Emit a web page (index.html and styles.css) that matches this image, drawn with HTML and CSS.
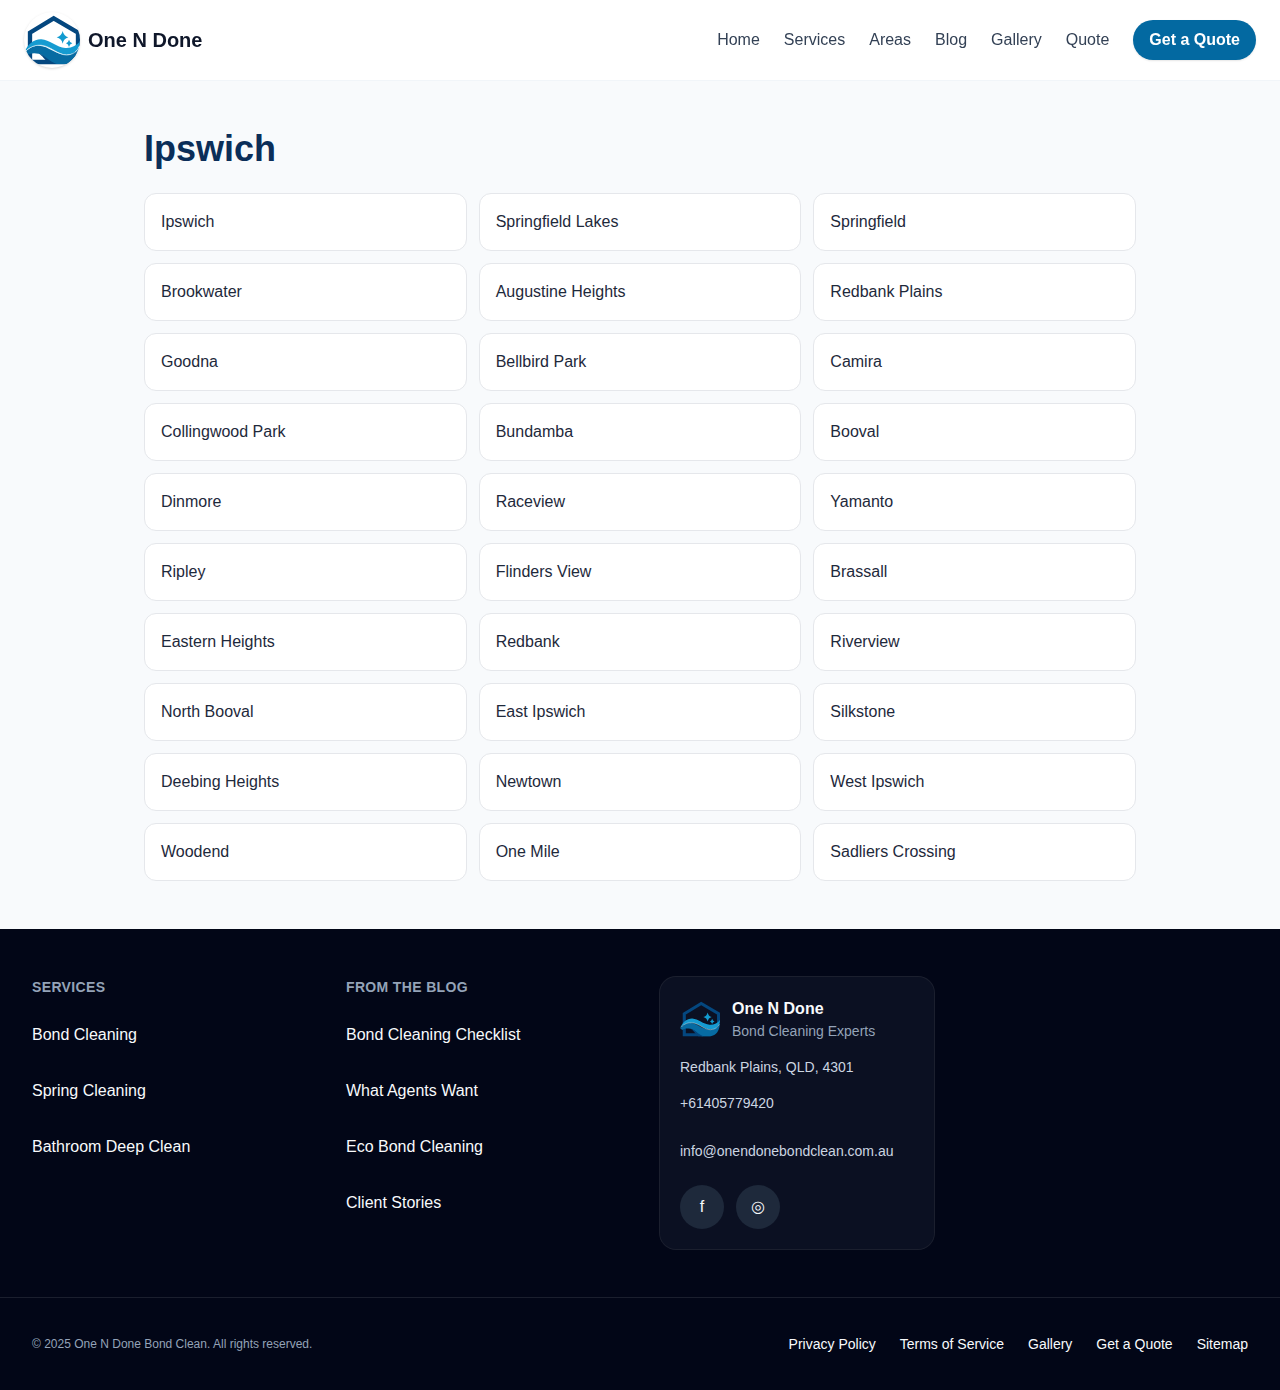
FILE: index.html
```html
<!DOCTYPE html>
<html lang="en">
<head>
<meta charset="utf-8">
<title>Ipswich | One N Done</title>
<link rel="stylesheet" href="styles.css">
</head>
<body>
<svg class="defs" width="0" height="0" aria-hidden="true">
  <symbol id="logo" viewBox="24 24 168 168">
    <path class="house" d="M42 130V86L113 43L186 86V126M42 140V174H152L180 146"/>
    <path class="star" d="M140 81Q143 96 157 100Q143 104 140 119Q137 104 122 100Q137 96 140 81ZM159 107Q161 116 169 118Q161 120 159 129Q157 120 150 118Q157 116 159 107Z"/>
    <path class="wave-dark" d="M25 148C42 126 66 120 90 130C114 142 134 155 156 153C174 151 184 143 192 124C190 156 178 180 150 180H116C98 176 88 154 68 149C54 146 42 147 34 154Z"/>
    <path class="wave-light" d="M25 145C36 120 54 105 76 106C100 108 122 130 148 132C168 133 182 124 192 112C190 138 174 152 152 152C126 152 106 128 76 124C56 122 40 129 25 145Z"/>
    <path class="wave-line" d="M28 143C42 127 60 122 78 124C106 128 126 153 152 153C172 152 184 142 190 128"/>
    <path class="wave-deep" d="M70 149C88 154 98 171 122 180H100C90 172 84 160 70 149Z"/>
  </symbol>
</svg>

<header class="site-header">
  <a class="brand" href="#"><svg class="brand-logo"><use href="#logo"/></svg><span>One N Done</span></a>
  <nav class="main-nav">
    <a href="#">Home</a><a href="#">Services</a><a href="#">Areas</a><a href="#">Blog</a><a href="#">Gallery</a><a href="#">Quote</a>
    <a class="cta" href="#">Get a Quote</a>
  </nav>
</header>

<main class="content">
  <h1>Ipswich</h1>
  <div class="suburbs">
    <a href="#">Ipswich</a><a href="#">Springfield Lakes</a><a href="#">Springfield</a>
    <a href="#">Brookwater</a><a href="#">Augustine Heights</a><a href="#">Redbank Plains</a>
    <a href="#">Goodna</a><a href="#">Bellbird Park</a><a href="#">Camira</a>
    <a href="#">Collingwood Park</a><a href="#">Bundamba</a><a href="#">Booval</a>
    <a href="#">Dinmore</a><a href="#">Raceview</a><a href="#">Yamanto</a>
    <a href="#">Ripley</a><a href="#">Flinders View</a><a href="#">Brassall</a>
    <a href="#">Eastern Heights</a><a href="#">Redbank</a><a href="#">Riverview</a>
    <a href="#">North Booval</a><a href="#">East Ipswich</a><a href="#">Silkstone</a>
    <a href="#">Deebing Heights</a><a href="#">Newtown</a><a href="#">West Ipswich</a>
    <a href="#">Woodend</a><a href="#">One Mile</a><a href="#">Sadliers Crossing</a>
  </div>
</main>

<footer class="site-footer">
  <div class="footer-grid">
    <section class="link-column">
      <h2>Services</h2>
      <a href="#">Bond Cleaning</a><a href="#">Spring Cleaning</a><a href="#">Bathroom Deep Clean</a>
    </section>
    <section class="link-column">
      <h2>From the Blog</h2>
      <a href="#">Bond Cleaning Checklist</a><a href="#">What Agents Want</a><a href="#">Eco Bond Cleaning</a><a href="#">Client Stories</a>
    </section>
    <section class="contact-card">
      <div class="contact-head">
        <svg class="contact-logo"><use href="#logo"/></svg>
        <div><p class="contact-name">One N Done</p><p class="contact-tag">Bond Cleaning Experts</p></div>
      </div>
      <address>
        <span>Redbank Plains, QLD, 4301</span>
        <a href="#">+61405779420</a>
        <a href="#">info@onendonebondclean.com.au</a>
      </address>
      <div class="social"><a href="#">f</a><a href="#">◎</a></div>
    </section>
  </div>
  <div class="footer-bottom">
    <p>© 2025 One N Done Bond Clean. All rights reserved.</p>
    <nav><a href="#">Privacy Policy</a><a href="#">Terms of Service</a><a href="#">Gallery</a><a href="#">Get a Quote</a><a href="#">Sitemap</a></nav>
  </div>
</footer>
</body>
</html>
```
FILE: styles.css
```css
* { box-sizing: border-box; margin: 0; padding: 0; }
body {
  font: 16px/24px "Liberation Sans", Arial, sans-serif;
  color: #1e293b;
  background: #f8fafc;
}
a { color: inherit; text-decoration: none; }
.defs { position: absolute; }

.house { fill: none; stroke: #04477f; stroke-width: 13; }
.contact-logo .house { stroke-width: 11; }
.star { fill: #129bd0; }
.wave-light { fill: #159bd1; }
.wave-dark { fill: #076ba2; }
.wave-line { fill: none; stroke: #d5edf7; stroke-width: 2; }
.contact-logo .wave-line { stroke-width: 1; }
.wave-deep { fill: #04477f; }

.site-header {
  position: sticky;
  top: 0;
  z-index: 10;
  display: flex;
  align-items: center;
  justify-content: space-between;
  height: 81px;
  padding: 0 24px;
  background: rgba(255, 255, 255, .95);
  border-bottom: 1px solid #f1f5f9;
  backdrop-filter: blur(8px);
}
.brand { display: flex; align-items: center; gap: 8px; font-size: 20px; font-weight: 700; color: #0f172a; }
.brand-logo { width: 56px; height: 56px; border-radius: 50%; background: #fff; box-shadow: 0 1px 3px rgba(0, 0, 0, .1), 0 1px 2px rgba(0, 0, 0, .06); }
.main-nav { display: flex; align-items: center; gap: 24px; color: #334155; }
.cta {
  padding: 8px 16px;
  border-radius: 20px;
  background: #0369a1;
  color: #fff;
  font-weight: 700;
  box-shadow: 0 1px 2px rgba(0, 0, 0, .1);
}

.content { width: 1024px; margin: 0 auto; padding: 48px 16px; }
h1 { margin-bottom: 24px; font-size: 36px; line-height: 40px; color: #0b2e59; }
.suburbs { display: grid; grid-template-columns: repeat(3, 1fr); gap: 12px; }
.suburbs a { padding: 16px; border: 1px solid #e5e7eb; border-radius: 12px; background: #fff; }

.site-footer { background: #020617; color: #f8fafc; }
.footer-grid {
  display: grid;
  grid-template-columns: repeat(4, 1fr);
  gap: 40px;
  padding: 48px 32px;
}
.link-column { display: flex; flex-direction: column; gap: 12px; }
.link-column h2 {
  margin-bottom: 4px;
  font-size: 14px;
  line-height: 20px;
  letter-spacing: .35px;
  text-transform: uppercase;
  color: #94a3b8;
}
.link-column a { line-height: 44px; }
.contact-card { padding: 20px; border-radius: 16px; background: #0b1022; box-shadow: 0 0 0 1px rgba(255, 255, 255, .1); }
.contact-head { display: flex; align-items: center; gap: 12px; }
.contact-logo { width: 40px; height: 40px; }
.contact-name { font-weight: 700; }
.contact-tag { font-size: 14px; line-height: 20px; color: #94a3b8; }
address { display: flex; flex-direction: column; gap: 4px; margin: 16px 0 12px; font-size: 14px; font-style: normal; line-height: 20px; color: #cbd5e1; }
address a { line-height: 44px; }
.social { display: flex; gap: 12px; }
.social a { width: 44px; height: 44px; border-radius: 50%; background: #1e293b; text-align: center; line-height: 44px; }
.footer-bottom {
  display: flex;
  align-items: center;
  justify-content: space-between;
  padding: 24px 32px;
  border-top: 1px solid rgba(255, 255, 255, .1);
}
.footer-bottom p { font-size: 12px; line-height: 16px; color: #94a3b8; }
.footer-bottom nav { display: flex; gap: 24px; font-size: 14px; line-height: 44px; }
```
